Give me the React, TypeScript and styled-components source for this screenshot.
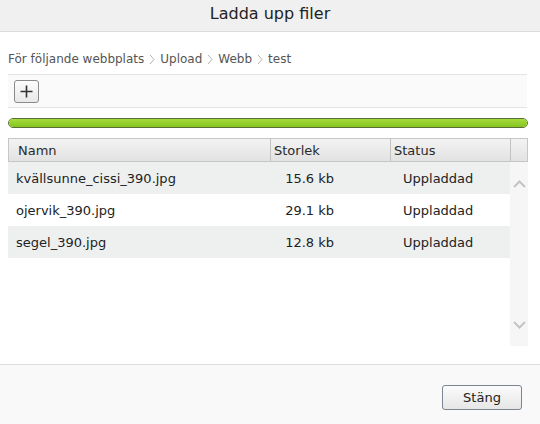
import React from 'react'
import styled, { createGlobalStyle } from 'styled-components'

const files = [
  { name: 'kvällsunne_cissi_390.jpg', size: '15.6 kb', status: 'Uppladdad' },
  { name: 'ojervik_390.jpg', size: '29.1 kb', status: 'Uppladdad' },
  { name: 'segel_390.jpg', size: '12.8 kb', status: 'Uppladdad' },
]

const crumbs = ['För följande webbplats', 'Upload', 'Webb', 'test']

const Chevron = ({ dir }: { dir: 'right' | 'up' | 'down' }) => {
  if (dir === 'right') {
    return (
      <svg width="6" height="11" viewBox="0 0 6 11">
        <path d="M1 1 L5 5.5 L1 10" fill="none" stroke="#b0b0b0" strokeWidth="1" />
      </svg>
    )
  }
  return (
    <svg width="13" height="8" viewBox="0 0 13 8">
      <path
        d={dir === 'up' ? 'M1 7 L6.5 1.5 L12 7' : 'M1 1 L6.5 6.5 L12 1'}
        fill="none"
        stroke="#c4c4c4"
        strokeWidth="2"
      />
    </svg>
  )
}

const App = () => {
  return (
    <Dialog>
      <GlobalStyle />
      <Header>Ladda upp filer</Header>
      <Body>
        <Breadcrumb>
          {crumbs.map((c, i) => (
            <React.Fragment key={c}>
              {i > 0 && <Chevron dir="right" />}
              <span>{c}</span>
            </React.Fragment>
          ))}
        </Breadcrumb>
        <Toolbar>
          <IconButton aria-label="Lägg till">
            <svg width="13" height="13" viewBox="0 0 13 13">
              <path d="M6.5 0.5 V12.5 M0.5 6.5 H12.5" stroke="#333" strokeWidth="1.6" />
            </svg>
          </IconButton>
        </Toolbar>
        <Progress>
          <ProgressFill style={{ width: '100%' }} />
        </Progress>
        <Table>
          <HeadRow>
            <HeadCell $width={262} $pad={9}>Namn</HeadCell>
            <HeadCell $width={120} $pad={3}>Storlek</HeadCell>
            <HeadCell $width={120} $pad={3}>Status</HeadCell>
            <HeadCell $width={18} $pad={0} />
          </HeadRow>
          <ListArea>
            <Rows>
              {files.map((f, i) => (
                <Row key={f.name} $odd={i % 2 === 0}>
                  <NameCell>{f.name}</NameCell>
                  <SizeCell>{f.size}</SizeCell>
                  <StatusCell>{f.status}</StatusCell>
                </Row>
              ))}
            </Rows>
            <Scrollbar>
              <Chevron dir="up" />
              <Chevron dir="down" />
            </Scrollbar>
          </ListArea>
        </Table>
      </Body>
      <Footer>
        <Button>Stäng</Button>
      </Footer>
    </Dialog>
  )
}

export default App

const GlobalStyle = createGlobalStyle`
  html, body {
    margin: 0;
    padding: 0;
    background: #ffffff;
  }
  body {
    font-family: "DejaVu Sans", Verdana, sans-serif;
    font-size: 13px;
    color: #222;
  }
`

const Dialog = styled.div`
  width: 540px;
  height: 424px;
  display: flex;
  flex-direction: column;
  background: #fff;
  overflow: hidden;
`

const Header = styled.div`
  height: 32px;
  flex-shrink: 0;
  display: flex;
  align-items: center;
  justify-content: center;
  background: #f0f0f0;
  border-bottom: 1px solid #dcdcdc;
  box-sizing: border-box;
  font-size: 16px;
  color: #222;
  padding-bottom: 4px;
`

const Body = styled.div`
  flex: 1;
  display: flex;
  flex-direction: column;
  padding: 0 12px 0 8px;
`

const Breadcrumb = styled.div`
  height: 43px;
  display: flex;
  align-items: center;
  gap: 4px;
  color: #555;
  font-size: 12px;
  padding-top: 12px;
  box-sizing: border-box;
  border-bottom: 1px solid #e4e4e4;
  margin-right: 1px;
  svg {
    margin: 0 1px;
  }
`

const Toolbar = styled.div`
  height: 32px;
  display: flex;
  align-items: center;
  padding-left: 6px;
  background: #fafafa;
  border-bottom: 1px solid #e4e4e4;
  margin-right: 1px;
`

const IconButton = styled.button`
  width: 25px;
  height: 23px;
  padding: 0;
  display: flex;
  align-items: center;
  justify-content: center;
  border: 1px solid #8a8a8a;
  border-radius: 3px;
  background: linear-gradient(#fdfdfd, #e8e8e8);
`

const Progress = styled.div`
  margin-top: 10px;
  height: 8px;
  border: 1px solid #5a6e3a;
  border-radius: 5px;
  background: #e8e8e8;
  overflow: hidden;
`

const ProgressFill = styled.div`
  height: 100%;
  background: linear-gradient(#a4dc3c, #86c41f);
`

const Table = styled.div`
  margin-top: 10px;
  display: flex;
  flex-direction: column;
`

const HeadRow = styled.div`
  height: 24px;
  display: flex;
  background: linear-gradient(#f3f3f3, #e2e2e2);
  border: 1px solid #c6c6c6;
  box-sizing: border-box;
`

const HeadCell = styled.div<{ $width: number; $pad: number }>`
  width: ${(p) => p.$width}px;
  flex-shrink: 0;
  box-sizing: border-box;
  display: flex;
  align-items: center;
  padding-left: ${(p) => p.$pad}px;
  font-size: 13px;
  color: #2a2a2a;
  &:not(:last-child) {
    border-right: 1px solid #c2c2c2;
  }
  &:last-child {
    flex: 1;
  }
`

const ListArea = styled.div`
  display: flex;
  height: 184px;
`

const Rows = styled.div`
  width: 502px;
  display: flex;
  flex-direction: column;
`

const Row = styled.div<{ $odd: boolean }>`
  height: 32px;
  display: flex;
  align-items: center;
  background: ${(p) => (p.$odd ? '#eef0f0' : '#ffffff')};
  color: #222;
  font-size: 13px;
`

const NameCell = styled.div`
  width: 262px;
  padding-left: 8px;
  box-sizing: border-box;
`

const SizeCell = styled.div`
  width: 64px;
  text-align: right;
`

const StatusCell = styled.div`
  padding-left: 69px;
`

const Scrollbar = styled.div`
  width: 18px;
  background: #f6f6f6;
  display: flex;
  flex-direction: column;
  align-items: center;
  justify-content: space-between;
  padding: 18px 0 17px;
  box-sizing: border-box;
`

const Footer = styled.div`
  height: 60px;
  flex-shrink: 0;
  display: flex;
  align-items: flex-start;
  justify-content: flex-end;
  padding: 20px 18px 0 0;
  box-sizing: border-box;
  background: #f9f9f9;
  border-top: 1px solid #dedede;
`

const Button = styled.button`
  width: 80px;
  height: 25px;
  border: 1px solid #7d8590;
  border-radius: 3px;
  background: linear-gradient(#fbfbfb, #e6e6e6);
  font-family: "DejaVu Sans", Verdana, sans-serif;
  font-size: 13px;
  color: #222;
  padding: 0;
`
